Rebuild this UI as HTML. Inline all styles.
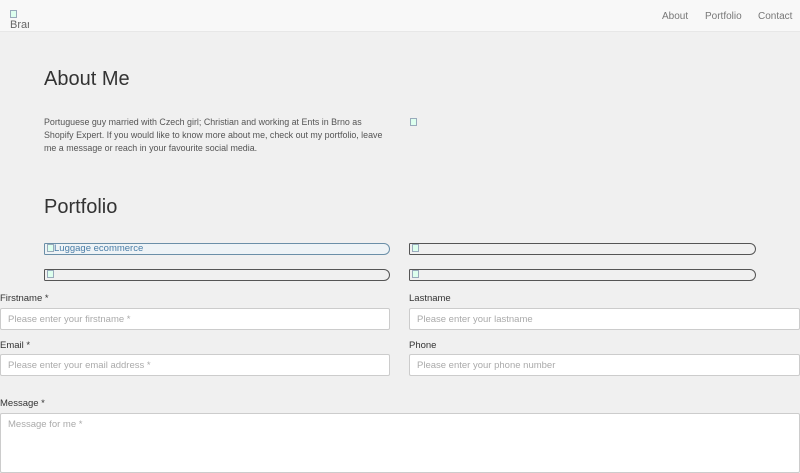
<!DOCTYPE html>
<html><head><style>
*{box-sizing:border-box;margin:0;padding:0}
body{width:800px;height:450px;overflow:hidden;background:#f0f0f0;font-family:"Liberation Sans",sans-serif;color:#333;position:relative}
.nav{position:absolute;left:0;top:0;width:800px;height:32px;background:#f8f8f8;border-bottom:1px solid #e7e7e7}
.nav a{position:absolute;top:11px;font-size:10px;color:#777;text-decoration:none}
.brand{position:absolute;left:10px;top:9px;font-size:11px;color:#666;width:19px;overflow:hidden;line-height:11px}
h2{position:absolute;font-weight:300;font-size:20px;color:#333}
p{position:absolute;left:44px;top:116px;width:345px;font-size:8.9px;line-height:13px;color:#555}
.pi{position:absolute;height:12px;border:1px solid #555;border-radius:2px 10px 10px 2px;font-size:9.5px;color:#4a7ea8;line-height:10px;padding-left:2px}
.ic{display:inline-block;width:7px;height:8px;border:1px solid #9ab;background:#dfe;vertical-align:-1px}
label{position:absolute;font-size:9.5px;color:#333}
.in{position:absolute;height:22px;background:#fff;border:1px solid #ccc;border-radius:2px;font-size:9.5px;color:#aaa;padding:5px 7px}
</style></head><body>
<div class="nav"><div class="brand"><span class="ic"></span><br>Brand</div>
<a style="left:662px">About</a><a style="left:705px">Portfolio</a><a style="left:758px">Contact</a></div>
<h2 style="left:44px;top:68px">About Me</h2>
<p>Portuguese guy married with Czech girl; Christian and working at Ents in Brno as Shopify Expert. If you would like to know more about me, check out my portfolio, leave me a message or reach in your favourite social media.</p>
<span class="ic" style="position:absolute;left:410px;top:118px"></span>
<h2 style="left:44px;top:196px">Portfolio</h2>
<div class="pi" style="left:44px;top:243px;width:346px;border-color:#6b8fa8;background:#eef3f6"><span class="ic"></span>Luggage ecommerce</div>
<div class="pi" style="left:409px;top:243px;width:347px"><span class="ic"></span></div>
<div class="pi" style="left:44px;top:269px;width:346px"><span class="ic"></span></div>
<div class="pi" style="left:409px;top:269px;width:347px"><span class="ic"></span></div>
<label style="left:0;top:293px">Firstname *</label>
<div class="in" style="left:0;top:308px;width:390px">Please enter your firstname *</div>
<label style="left:409px;top:293px">Lastname</label>
<div class="in" style="left:409px;top:308px;width:391px">Please enter your lastname</div>
<label style="left:0;top:340px">Email *</label>
<div class="in" style="left:0;top:354px;width:390px">Please enter your email address *</div>
<label style="left:409px;top:340px">Phone</label>
<div class="in" style="left:409px;top:354px;width:391px">Please enter your phone number</div>
<label style="left:0;top:398px">Message *</label>
<div class="in" style="left:0;top:413px;width:800px;height:60px">Message for me *</div>
</body></html>
